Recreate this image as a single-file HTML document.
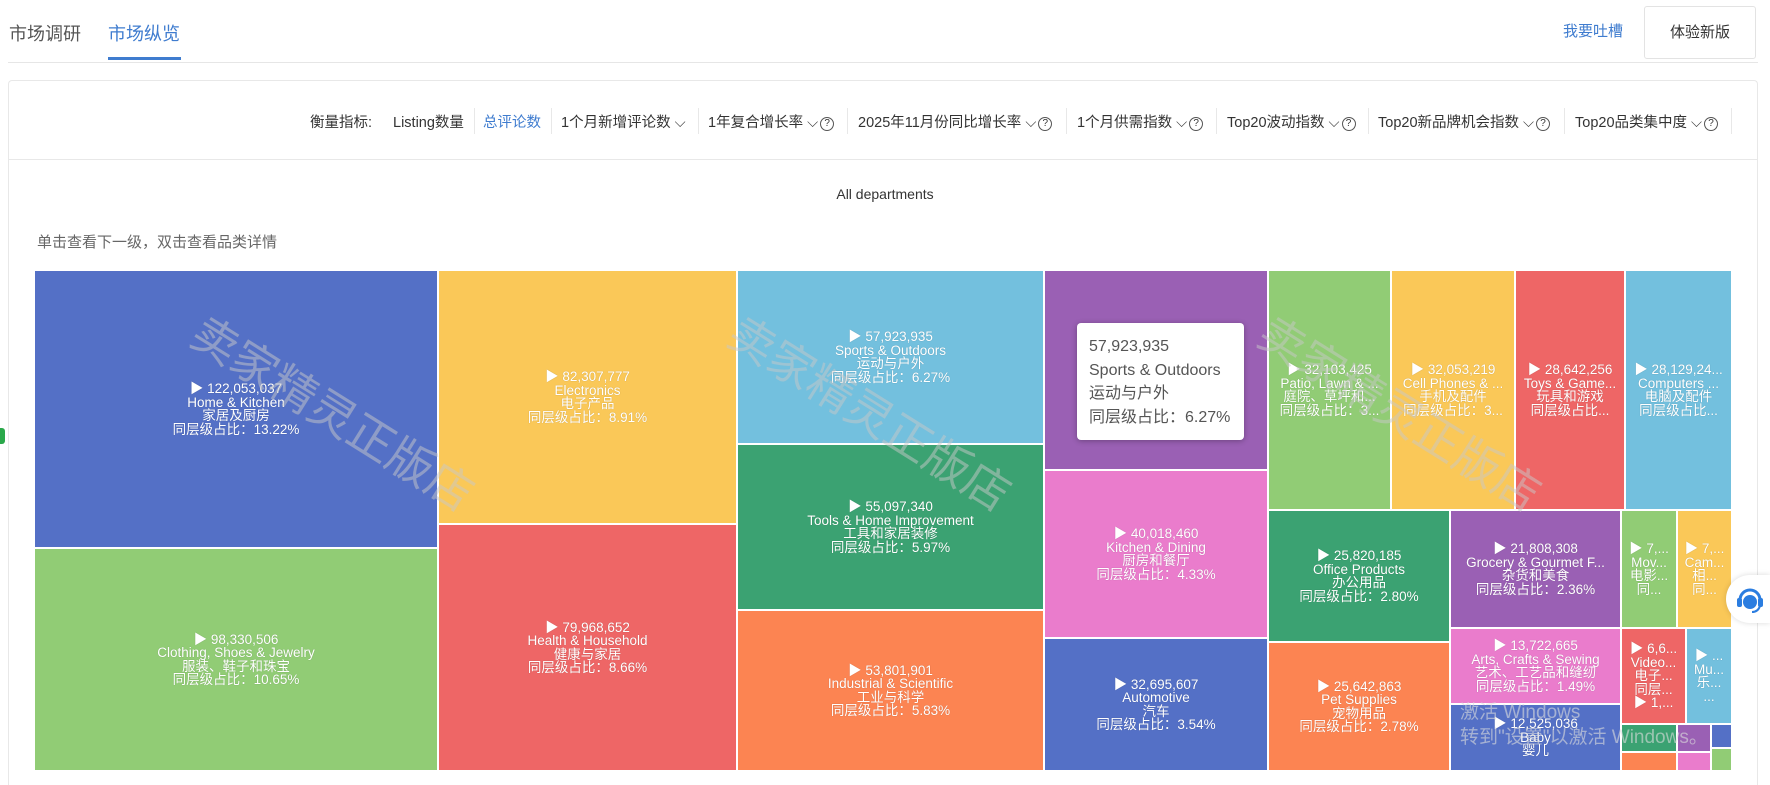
<!DOCTYPE html>
<html style="width:1770px;height:785px;overflow:hidden"><head><meta charset="utf-8"><style>
*{margin:0;padding:0;box-sizing:border-box}
body{width:1770px;height:785px;background:#fff;position:relative;overflow:hidden;font-family:"Liberation Sans","Noto Sans CJK SC",sans-serif;color:#333}
.a{position:absolute;white-space:nowrap}
.tab{font-size:18px;top:20px;color:#555}
.tb{top:111px;font-size:14.5px;color:#333}
.sep{position:absolute;top:108px;width:1px;height:26px;background:#e8e8e8}
.q{display:inline-block;width:14px;height:14px;border:1px solid #555;border-radius:50%;font-size:10px;line-height:12px;text-align:center;vertical-align:1px;margin-left:2px}
.c{position:absolute;border:1px solid #fff;display:flex;align-items:center;justify-content:center;text-align:center;color:#fff;font-family:"Liberation Sans Narrow","Liberation Sans","Noto Sans CJK SC",sans-serif;font-size:13.5px;line-height:13.5px;overflow:hidden;text-shadow:0 0 1px rgba(0,0,0,.25)}
.wm{position:absolute;font-size:46px;color:rgba(200,200,200,.5);transform:rotate(32deg);transform-origin:left top;white-space:nowrap;font-family:"Noto Sans CJK SC",sans-serif;pointer-events:none}
</style></head><body>
<div class="a tab" style="left:9px">市场调研</div>
<div class="a tab" style="left:108px;color:#3f7ccf">市场纵览</div>
<div class="a" style="left:108px;top:57px;width:73px;height:3px;background:#3f7ccf"></div>
<div class="a" style="left:8px;top:62px;width:1750px;height:1px;background:#e6e6e6"></div>
<div class="a" style="left:1563px;top:20px;font-size:15px;color:#3f7ccf">我要吐槽</div>
<div class="a" style="left:1644px;top:6px;width:112px;height:53px;border:1px solid #e3e3e3;border-radius:3px;font-size:15px;line-height:51px;text-align:center;color:#333">体验新版</div>

<div class="a" style="left:8px;top:80px;width:1750px;height:705px;border:1px solid #e8e8e8;border-bottom:none;border-radius:4px 4px 0 0"></div>
<div class="a" style="left:8px;top:159px;width:1750px;height:1px;background:#e8e8e8"></div>

<div class="a tb" style="left:310px">衡量指标:</div>
<div class="a tb" style="left:393px">Listing数量</div>
<div class="sep" style="left:474px"></div>
<div class="a tb" style="left:483px;color:#3f7ccf">总评论数</div>
<div class="sep" style="left:551px"></div>
<div class="a tb" style="left:561px">1个月新增评论数 ⌵</div>
<div class="sep" style="left:698px"></div>
<div class="a tb" style="left:708px">1年复合增长率 ⌵<span class="q">?</span></div>
<div class="sep" style="left:847px"></div>
<div class="a tb" style="left:858px">2025年11月份同比增长率 ⌵<span class="q">?</span></div>
<div class="sep" style="left:1066px"></div>
<div class="a tb" style="left:1077px">1个月供需指数 ⌵<span class="q">?</span></div>
<div class="sep" style="left:1216px"></div>
<div class="a tb" style="left:1227px">Top20波动指数 ⌵<span class="q">?</span></div>
<div class="sep" style="left:1368px"></div>
<div class="a tb" style="left:1378px">Top20新品牌机会指数 ⌵<span class="q">?</span></div>
<div class="sep" style="left:1564px"></div>
<div class="a tb" style="left:1575px">Top20品类集中度 ⌵<span class="q">?</span></div>
<div class="sep" style="left:1731px"></div>

<div class="a" style="left:0;width:1770px;text-align:center;top:186px;font-size:14px;color:#333">All departments</div>
<div class="a" style="left:37px;top:231px;font-size:15px;color:#666">单击查看下一级，双击查看品类详情</div>
<div class="a" style="left:0;top:428px;width:5px;height:16px;background:#2aa84a;border-radius:0 3px 3px 0"></div>

<div class="c" style="left:34px;top:270px;width:404px;height:278px;background:#5470c6"><div>▶ 122,053,037<br>Home &amp; Kitchen<br>家居及厨房<br>同层级占比：13.22%</div></div>
<div class="c" style="left:34px;top:548px;width:404px;height:223px;background:#91cc75"><div>▶ 98,330,506<br>Clothing, Shoes &amp; Jewelry<br>服装、鞋子和珠宝<br>同层级占比：10.65%</div></div>
<div class="c" style="left:438px;top:270px;width:299px;height:254px;background:#fac858"><div>▶ 82,307,777<br>Electronics<br>电子产品<br>同层级占比：8.91%</div></div>
<div class="c" style="left:438px;top:524px;width:299px;height:247px;background:#ee6666"><div>▶ 79,968,652<br>Health &amp; Household<br>健康与家居<br>同层级占比：8.66%</div></div>
<div class="c" style="left:737px;top:270px;width:307px;height:174px;background:#73c0de"><div>▶ 57,923,935<br>Sports &amp; Outdoors<br>运动与户外<br>同层级占比：6.27%</div></div>
<div class="c" style="left:737px;top:444px;width:307px;height:166px;background:#3ba272"><div>▶ 55,097,340<br>Tools &amp; Home Improvement<br>工具和家居装修<br>同层级占比：5.97%</div></div>
<div class="c" style="left:737px;top:610px;width:307px;height:161px;background:#fc8452"><div>▶ 53,801,901<br>Industrial &amp; Scientific<br>工业与科学<br>同层级占比：5.83%</div></div>
<div class="c" style="left:1044px;top:270px;width:224px;height:200px;background:#9a60b4"></div>
<div class="c" style="left:1044px;top:470px;width:224px;height:168px;background:#ea7ccc"><div>▶ 40,018,460<br>Kitchen &amp; Dining<br>厨房和餐厅<br>同层级占比：4.33%</div></div>
<div class="c" style="left:1044px;top:638px;width:224px;height:133px;background:#5470c6"><div>▶ 32,695,607<br>Automotive<br>汽车<br>同层级占比：3.54%</div></div>
<div class="c" style="left:1268px;top:270px;width:123px;height:240px;background:#91cc75"><div>▶ 32,103,425<br>Patio, Lawn &amp; ...<br>庭院、草坪和...<br>同层级占比：3...</div></div>
<div class="c" style="left:1391px;top:270px;width:124px;height:240px;background:#fac858"><div>▶ 32,053,219<br>Cell Phones &amp; ...<br>手机及配件<br>同层级占比：3...</div></div>
<div class="c" style="left:1515px;top:270px;width:110px;height:240px;background:#ee6666"><div>▶ 28,642,256<br>Toys &amp; Game...<br>玩具和游戏<br>同层级占比...</div></div>
<div class="c" style="left:1625px;top:270px;width:107px;height:240px;background:#73c0de"><div>▶ 28,129,24...<br>Computers ...<br>电脑及配件<br>同层级占比...</div></div>
<div class="c" style="left:1268px;top:510px;width:182px;height:132px;background:#3ba272"><div>▶ 25,820,185<br>Office Products<br>办公用品<br>同层级占比：2.80%</div></div>
<div class="c" style="left:1268px;top:642px;width:182px;height:129px;background:#fc8452"><div>▶ 25,642,863<br>Pet Supplies<br>宠物用品<br>同层级占比：2.78%</div></div>
<div class="c" style="left:1450px;top:510px;width:171px;height:118px;background:#9a60b4"><div>▶ 21,808,308<br>Grocery &amp; Gourmet F...<br>杂货和美食<br>同层级占比：2.36%</div></div>
<div class="c" style="left:1450px;top:628px;width:171px;height:76px;background:#ea7ccc"><div>▶ 13,722,665<br>Arts, Crafts &amp; Sewing<br>艺术、工艺品和缝纫<br>同层级占比：1.49%</div></div>
<div class="c" style="left:1450px;top:704px;width:171px;height:67px;background:#5470c6"><div>▶ 12,525,036<br>Baby<br>婴儿</div></div>
<div class="c" style="left:1621px;top:510px;width:56px;height:118px;background:#91cc75"><div>▶ 7,...<br>Mov...<br>电影...<br>同...</div></div>
<div class="c" style="left:1677px;top:510px;width:55px;height:118px;background:#fac858"><div>▶ 7,...<br>Cam...<br>相...<br>同...</div></div>
<div class="c" style="left:1621px;top:628px;width:65px;height:96px;background:#ee6666"><div>▶ 6,6...<br>Video...<br>电子...<br>同层...<br>▶ 1,...</div></div>
<div class="c" style="left:1686px;top:628px;width:46px;height:96px;background:#73c0de"><div>▶ ...<br>Mu...<br>乐...<br>...</div></div>
<div class="c" style="left:1621px;top:724px;width:56px;height:28px;background:#3ba272"></div>
<div class="c" style="left:1621px;top:752px;width:56px;height:19px;background:#fc8452"></div>
<div class="c" style="left:1677px;top:724px;width:34px;height:28px;background:#9a60b4"></div>
<div class="c" style="left:1677px;top:752px;width:34px;height:19px;background:#ea7ccc"></div>
<div class="c" style="left:1711px;top:724px;width:21px;height:24px;background:#5470c6"></div>
<div class="c" style="left:1711px;top:748px;width:21px;height:23px;background:#91cc75"></div>

<div class="wm" style="left:215px;top:298px">卖家精灵正版店</div>
<div class="wm" style="left:752px;top:298px">卖家精灵正版店</div>
<div class="wm" style="left:1282px;top:298px">卖家精灵正版店</div>
<div class="a" style="left:1460px;top:700px;font-size:19px;color:rgba(220,220,220,.6);line-height:25px">激活 Windows<br>转到"设置"以激活 Windows。</div>

<div class="a" style="left:1077px;top:323px;width:167px;height:117px;background:#fff;border-radius:4px;box-shadow:0 1px 6px rgba(0,0,0,.3);padding:12px 0 0 12px;font-size:16px;line-height:23.5px;color:#555">57,923,935<br>Sports &amp; Outdoors<br>运动与户外<br>同层级占比：6.27%</div>

<div class="a" style="left:1726px;top:575px;width:44px;height:48px;border-radius:24px 0 0 24px;background:#fff;box-shadow:0 0 6px rgba(0,0,0,.15)">
<svg width="48" height="48" viewBox="0 0 48 48"><path d="M14 25a10 10 0 0 1 20 0" fill="none" stroke="#2b7de0" stroke-width="3"/><rect x="11" y="23" width="5" height="9" rx="2" fill="#2b7de0"/><rect x="32" y="23" width="5" height="9" rx="2" fill="#2b7de0"/><circle cx="24" cy="27" r="7" fill="#2b7de0"/><path d="M34 31q-2 6-8 6" fill="none" stroke="#2b7de0" stroke-width="2"/></svg></div>
</body></html>
